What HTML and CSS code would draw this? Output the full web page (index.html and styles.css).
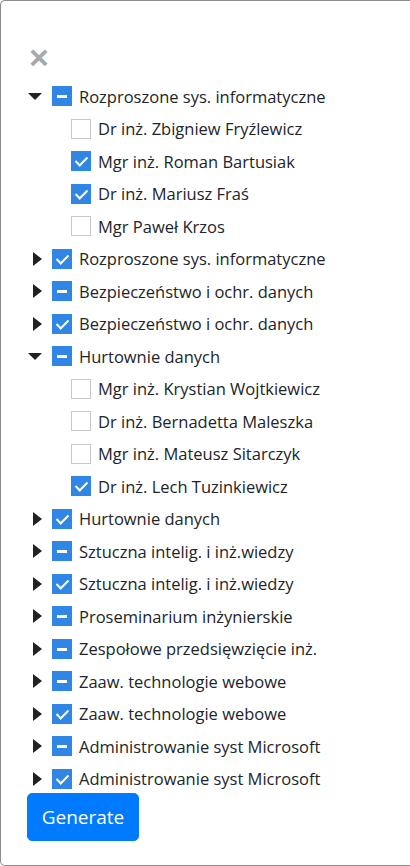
FILE: index.html
```html
<!DOCTYPE html>
<html>
<head>
<meta charset="utf-8">
<link rel="stylesheet" href="styles.css">
</head>
<body>
<div class="dialog">
  <button class="close" aria-label="Close">&times;</button>
  <ul class="tree">
    <li class="node">
      <div class="row"><span class="caret down"></span><span class="cb ind"></span><span class="label">Rozproszone sys. informatyczne</span></div>
      <ul class="children">
        <li class="row child"><span class="cb"></span><span class="label">Dr inż. Zbigniew Fryźlewicz</span></li>
        <li class="row child"><span class="cb chk"></span><span class="label">Mgr inż. Roman Bartusiak</span></li>
        <li class="row child"><span class="cb chk"></span><span class="label">Dr inż. Mariusz Fraś</span></li>
        <li class="row child"><span class="cb"></span><span class="label">Mgr Paweł Krzos</span></li>
      </ul>
    </li>
    <li class="node"><div class="row"><span class="caret right"></span><span class="cb chk"></span><span class="label">Rozproszone sys. informatyczne</span></div></li>
    <li class="node"><div class="row"><span class="caret right"></span><span class="cb ind"></span><span class="label">Bezpieczeństwo i ochr. danych</span></div></li>
    <li class="node"><div class="row"><span class="caret right"></span><span class="cb chk"></span><span class="label">Bezpieczeństwo i ochr. danych</span></div></li>
    <li class="node">
      <div class="row"><span class="caret down"></span><span class="cb ind"></span><span class="label">Hurtownie danych</span></div>
      <ul class="children">
        <li class="row child"><span class="cb"></span><span class="label">Mgr inż. Krystian Wojtkiewicz</span></li>
        <li class="row child"><span class="cb"></span><span class="label">Dr inż. Bernadetta Maleszka</span></li>
        <li class="row child"><span class="cb"></span><span class="label">Mgr inż. Mateusz Sitarczyk</span></li>
        <li class="row child"><span class="cb chk"></span><span class="label">Dr inż. Lech Tuzinkiewicz</span></li>
      </ul>
    </li>
    <li class="node"><div class="row"><span class="caret right"></span><span class="cb chk"></span><span class="label">Hurtownie danych</span></div></li>
    <li class="node"><div class="row"><span class="caret right"></span><span class="cb ind"></span><span class="label">Sztuczna intelig. i inż.wiedzy</span></div></li>
    <li class="node"><div class="row"><span class="caret right"></span><span class="cb chk"></span><span class="label">Sztuczna intelig. i inż.wiedzy</span></div></li>
    <li class="node"><div class="row"><span class="caret right"></span><span class="cb ind"></span><span class="label">Proseminarium inżynierskie</span></div></li>
    <li class="node"><div class="row"><span class="caret right"></span><span class="cb ind"></span><span class="label">Zespołowe przedsięwzięcie inż.</span></div></li>
    <li class="node"><div class="row"><span class="caret right"></span><span class="cb ind"></span><span class="label">Zaaw. technologie webowe</span></div></li>
    <li class="node"><div class="row"><span class="caret right"></span><span class="cb chk"></span><span class="label">Zaaw. technologie webowe</span></div></li>
    <li class="node"><div class="row"><span class="caret right"></span><span class="cb ind"></span><span class="label">Administrowanie syst Microsoft</span></div></li>
    <li class="node"><div class="row"><span class="caret right"></span><span class="cb chk"></span><span class="label">Administrowanie syst Microsoft</span></div></li>
  </ul>
  <button class="btn">Generate</button>
</div>
</body>
</html>
```

FILE: styles.css
```css
html, body {
  margin: 0;
  padding: 0;
  background: #fff;
  overflow: hidden;
}
body {
  font-family: "Open Sans", "Noto Sans", sans-serif;
  color: #212529;
}
.dialog {
  box-sizing: border-box;
  width: 410px;
  height: 866px;
  border: 1px solid #8c8c8c;
  border-right: 0;
  border-radius: 5px 0 0 5px;
  padding: 42px 0 0 25px;
  display: flex;
  flex-direction: column;
  align-items: flex-start;
}
.close {
  border: 0;
  background: transparent;
  padding: 0;
  margin: 0 0 9px 3px;
  font-family: "Liberation Sans", sans-serif;
  font-size: 34px;
  font-weight: 700;
  line-height: 28px;
  color: #a9a9a9;
  cursor: pointer;
}
.tree, .children {
  list-style: none;
  margin: 0;
  padding: 0;
}
.row {
  display: flex;
  align-items: center;
  height: 32.5px;
}
.child {
  padding-left: 45px;
}
.caret {
  width: 26px;
  height: 14px;
  position: relative;
}
.caret.down::before {
  content: "";
  position: absolute;
  left: 2px;
  top: 4px;
  border-left: 7px solid transparent;
  border-right: 7px solid transparent;
  border-top: 7px solid #222;
}
.caret.right::before {
  content: "";
  position: absolute;
  left: 7px;
  top: 0;
  border-top: 7px solid transparent;
  border-bottom: 7px solid transparent;
  border-left: 9px solid #222;
}
.cb {
  box-sizing: border-box;
  width: 20px;
  height: 20px;
  border: 1px solid #c8c8c8;
  background: #fff;
  margin-right: 7px;
  position: relative;
  flex: none;
}
.cb.chk, .cb.ind {
  background: #2f86e4;
  border-color: #2f86e4;
}
.cb.ind::after {
  content: "";
  position: absolute;
  left: 4px;
  top: 8px;
  width: 10px;
  height: 3px;
  background: #fff;
}
.cb.chk::after {
  content: "";
  position: absolute;
  left: 6px;
  top: 2px;
  width: 5px;
  height: 10px;
  border-right: 2px solid #fff;
  border-bottom: 2px solid #fff;
  transform: rotate(45deg);
}
.label {
  font-size: 16.5px;
  white-space: nowrap;
}
.btn {
  margin-top: -2px;
  margin-left: 1px;
  background: #007bff;
  color: #fff;
  border: 1px solid #007bff;
  border-radius: 5px;
  font-family: "Open Sans", "Noto Sans", sans-serif;
  font-size: 19px;
  height: 48px;
  width: 112px;
  padding: 0;
}
```
